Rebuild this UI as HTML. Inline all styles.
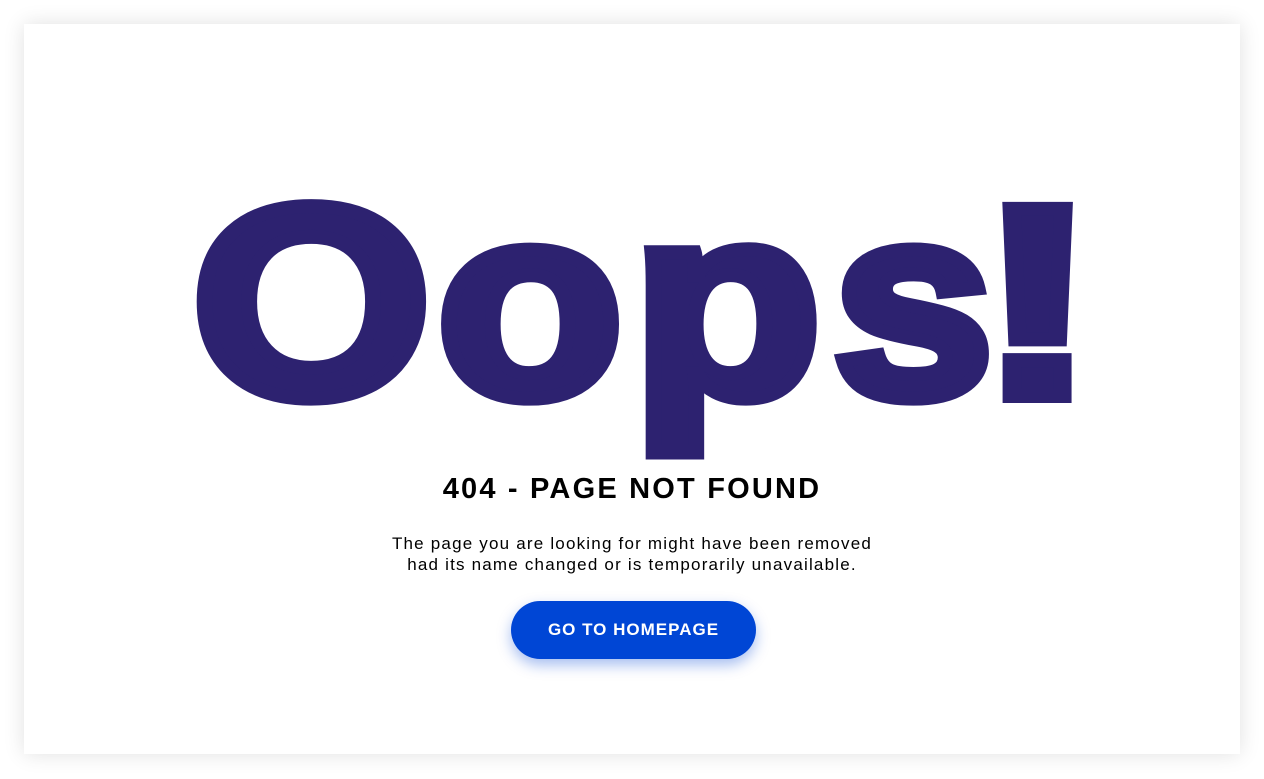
<!DOCTYPE html>
<html><head><meta charset="utf-8"><style>
html,body{margin:0;padding:0;background:#fff;width:1264px;height:779px;overflow:hidden;font-family:"Liberation Sans",sans-serif;}
.card{position:absolute;left:24px;top:24px;width:1216px;height:730px;background:#fff;box-shadow:0 0 20px rgba(0,0,0,0.12);}
.l{position:absolute;top:166px;font-weight:bold;font-size:272px;line-height:1;color:#2d2270;
 -webkit-text-stroke:14px #2d2270;transform-origin:left}
h2{position:absolute;left:0;width:1264px;top:473px;margin:0;text-align:center;font-size:29px;font-weight:bold;color:#000;letter-spacing:2.2px}
p{position:absolute;left:0;width:1264px;top:533px;margin:0;text-align:center;font-size:17px;line-height:21px;color:#000;letter-spacing:1.2px}
.btn{position:absolute;left:511px;top:601px;width:245px;height:58px;border-radius:29px;background:#0046d5;color:#fff;font-weight:bold;font-size:17px;line-height:58px;text-align:center;letter-spacing:1px;box-shadow:0 6px 14px rgba(0,70,213,0.35)}
</style></head><body>
<div class="card"></div>
<div class="l" style="left:192px;transform:scaleX(1.13)">O</div>
<div class="l" style="left:437px;transform:scaleX(1.12)">o</div>
<div class="l" style="left:632px;transform:scaleX(1.14)">p</div>
<div class="l" style="left:833px;transform:scaleX(1.06)">s</div>
<div class="l" style="left:978px;transform:scaleX(1.32)">!</div>
<h2>404 - PAGE NOT FOUND</h2>
<p>The page you are looking for might have been removed<br>had its name changed or is temporarily unavailable.</p>
<div class="btn">GO TO HOMEPAGE</div>
</body></html>
